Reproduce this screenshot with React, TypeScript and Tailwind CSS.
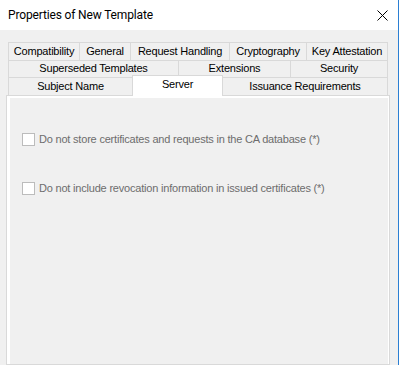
import React from "react";

const tabCls =
  "h-full flex items-center justify-center border-t border-l border-[#d9d9d9] bg-[#f0f0f0] text-black";

function Tab({ w, label, last }: { w: number; label: string; last?: boolean }) {
  return (
    <div
      className={tabCls + (last ? " border-r" : "")}
      style={{ width: w }}
    >
      <span className="leading-none pb-px">{label}</span>
    </div>
  );
}

function Check({ label }: { label: string }) {
  return (
    <div className="flex items-center h-[13px]">
      <div className="w-[13px] h-[13px] border border-[#bcbcbc] bg-white shrink-0" />
      <span className="ml-[4px] text-[#6d6d6d] whitespace-nowrap leading-none">{label}</span>
    </div>
  );
}

export default function App() {
  return (
    <div
      className="w-[399px] h-[365px] overflow-hidden bg-[#f0f0f0] border-r border-[#2b7fd3] flex flex-col"
      style={{ fontFamily: '"Liberation Sans", Arial, sans-serif' }}
    >
      {/* title bar */}
      <div className="h-[30px] bg-white flex items-center justify-between shrink-0">
        <span
          className="pl-[8px] text-[12px] tracking-[-0.15px] text-black"
          style={{ fontFamily: 'Roboto, "Noto Sans", sans-serif' }}
        >
          Properties of New Template
        </span>
        <svg width="11" height="11" viewBox="0 0 11 11" className="mr-[10px]">
          <path d="M0.5 0.5 L10.5 10.5 M10.5 0.5 L0.5 10.5" stroke="#000" strokeWidth="1" />
        </svg>
      </div>

      <div className="flex-1 flex flex-col pt-[12px] text-[11px] tracking-[-0.2px]">
        {/* tab rows */}
        <div className="ml-[8px] w-[380px] flex flex-col">
          <div className="flex h-[18px]">
            <Tab w={71} label="Compatibility" />
            <Tab w={51} label="General" />
            <Tab w={99} label="Request Handling" />
            <Tab w={77} label="Cryptography" />
            <Tab w={82} label="Key Attestation" last />
          </div>
          <div className="flex h-[17px]">
            <Tab w={170} label="Superseded Templates" />
            <Tab w={112} label="Extensions" />
            <Tab w={98} label="Security" last />
          </div>
          <div className="flex h-[18px] items-end">
            <Tab w={124} label="Subject Name" />
            <div className="relative z-10 -mb-px h-[21px] w-[91px] flex items-center justify-center border-t border-l border-r border-[#d9d9d9] bg-white pb-[3px]">
              <span className="leading-none">Server</span>
            </div>
            <div className="h-full flex items-center justify-center border-t border-r border-[#d9d9d9] bg-[#f0f0f0] w-[165px]">
              <span className="leading-none pb-px">Issuance Requirements</span>
            </div>
          </div>
        </div>

        {/* panel */}
        <div className="ml-[6px] w-[384px] flex-1 border border-[#d9d9d9] bg-white pl-[3px] pr-px pt-[2px] flex">
          <div className="flex-1 bg-[#f0f0f0] pl-[12px] pt-[35px] flex flex-col gap-[36px]">
            <Check label="Do not store certificates and requests in the CA database (*)" />
            <Check label="Do not include revocation information in issued certificates (*)" />
          </div>
        </div>
      </div>
    </div>
  );
}
